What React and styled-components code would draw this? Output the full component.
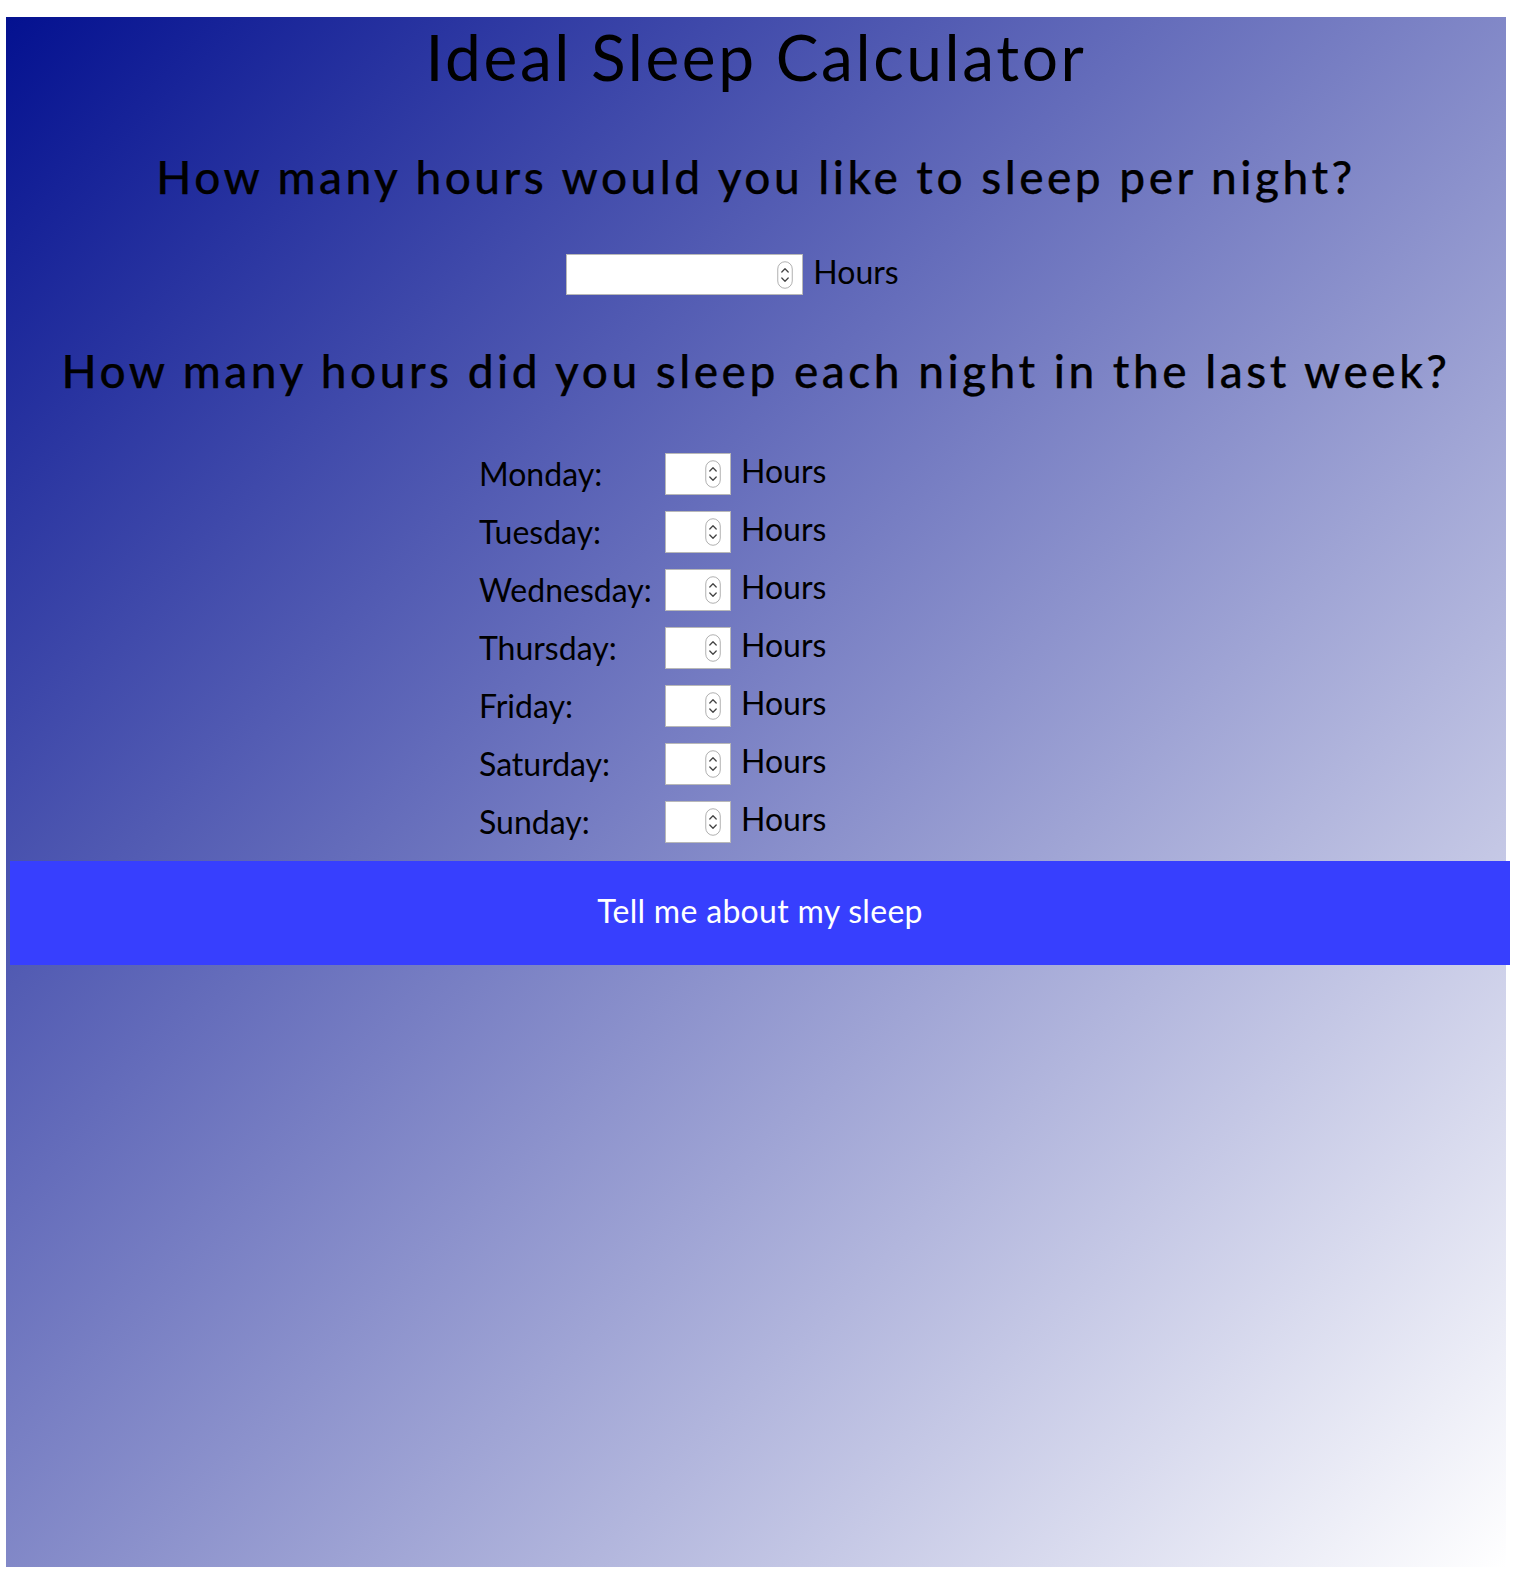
import styled, { createGlobalStyle } from "styled-components";

const GlobalStyle = createGlobalStyle`
  body {
    margin: 0;
    background: #ffffff;
    font-family: "Lato", "Open Sans", sans-serif;
  }
`;

const Page = styled.div`
  margin: 17px 0 11px 6px;
  width: 1500px;
  height: 1550px;
  background: linear-gradient(to bottom right, #041190 0%, #ffffff 100%);
  color: #000;
  display: flex;
  flex-direction: column;
  align-items: center;
`;

const Title = styled.h1`
  margin: 0;
  font-size: 64px;
  font-weight: 400;
  line-height: 80px;
  letter-spacing: 2.6px;
`;

const Question = styled.h2`
  margin: ${(p) => p.$top}px 0 0;
  padding-top: 2px;
  height: 58px;
  font-size: 46px;
  font-weight: 500;
  line-height: 60px;
  letter-spacing: 3.5px;
  white-space: nowrap;
  -webkit-text-stroke: 0.25px #000;
`;

const GoalRow = styled.div`
  margin-top: 49px;
  display: flex;
  align-items: center;
  gap: 10px;
  margin-left: -47px;
`;

const Unit = styled.span`
  font-size: 32px;
  line-height: 40px;
  margin-top: -6px;
`;

const Field = styled.div`
  position: relative;
  width: ${(p) => p.$w}px;
  height: ${(p) => p.$h}px;
`;

const NumberInput = styled.input`
  box-sizing: border-box;
  width: 100%;
  height: 100%;
  border: 1px solid #b8b8b8;
  background: #fff;
  padding: 0 28px 0 6px;
  font-size: 24px;
  font-family: inherit;
  outline: none;
`;

const Spinner = styled.svg`
  position: absolute;
  right: 10px;
  top: 50%;
  transform: translateY(-50%);
  pointer-events: none;
`;

const Days = styled.div`
  margin-top: 46px;
  align-self: flex-start;
  margin-left: 473px;
  display: flex;
  flex-direction: column;
`;

const DayRow = styled.div`
  height: 58px;
  display: flex;
  align-items: center;
`;

const DayLabel = styled.label`
  width: 186px;
  font-size: 32px;
  line-height: 40px;
  margin-top: 0;
`;

const DayUnit = styled.span`
  margin-left: 10px;
  font-size: 32px;
  line-height: 40px;
  margin-top: -7px;
`;

const SubmitButton = styled.button`
  margin-top: 10px;
  align-self: flex-start;
  margin-left: 4px;
  width: 1500px;
  height: 104px;
  flex-shrink: 0;
  border: none;
  padding: 0 0 6px;
  background: #373ffe;
  color: #fff;
  font-family: inherit;
  font-size: 32px;
  letter-spacing: 0.3px;
  cursor: pointer;
`;

const SpinIcon = () => (
  <Spinner width="16" height="28" viewBox="0 0 16 28">
    <rect x="0.75" y="0.75" width="14.5" height="26.5" rx="7.25" fill="#fff" stroke="#b0b0b0" strokeWidth="1" />
    <path d="M4.8 11 L8 7.8 L11.2 11" fill="none" stroke="#444" strokeWidth="1.3" strokeLinecap="round" strokeLinejoin="round" />
    <path d="M4.8 17 L8 20.2 L11.2 17" fill="none" stroke="#444" strokeWidth="1.3" strokeLinecap="round" strokeLinejoin="round" />
  </Spinner>
);

const NumberField = ({ w, h, name }) => (
  <Field $w={w} $h={h}>
    <NumberInput type="text" inputMode="numeric" name={name} />
    <SpinIcon />
  </Field>
);

const days = ["Monday", "Tuesday", "Wednesday", "Thursday", "Friday", "Saturday", "Sunday"];

const App = () => {
  return (
    <>
      <GlobalStyle />
      <Page>
        <Title>Ideal Sleep Calculator</Title>
        <Question $top={48}>How many hours would you like to sleep per night?</Question>
        <GoalRow>
          <NumberField w={237} h={41} name="goal" />
          <Unit>Hours</Unit>
        </GoalRow>
        <Question $top={44}>How many hours did you sleep each night in the last week?</Question>
        <Days>
          {days.map((d) => (
            <DayRow key={d}>
              <DayLabel>{d}:</DayLabel>
              <NumberField w={66} h={42} name={d.toLowerCase()} />
              <DayUnit>Hours</DayUnit>
            </DayRow>
          ))}
        </Days>
        <SubmitButton>Tell me about my sleep</SubmitButton>
      </Page>
    </>
  );
};

export default App;
